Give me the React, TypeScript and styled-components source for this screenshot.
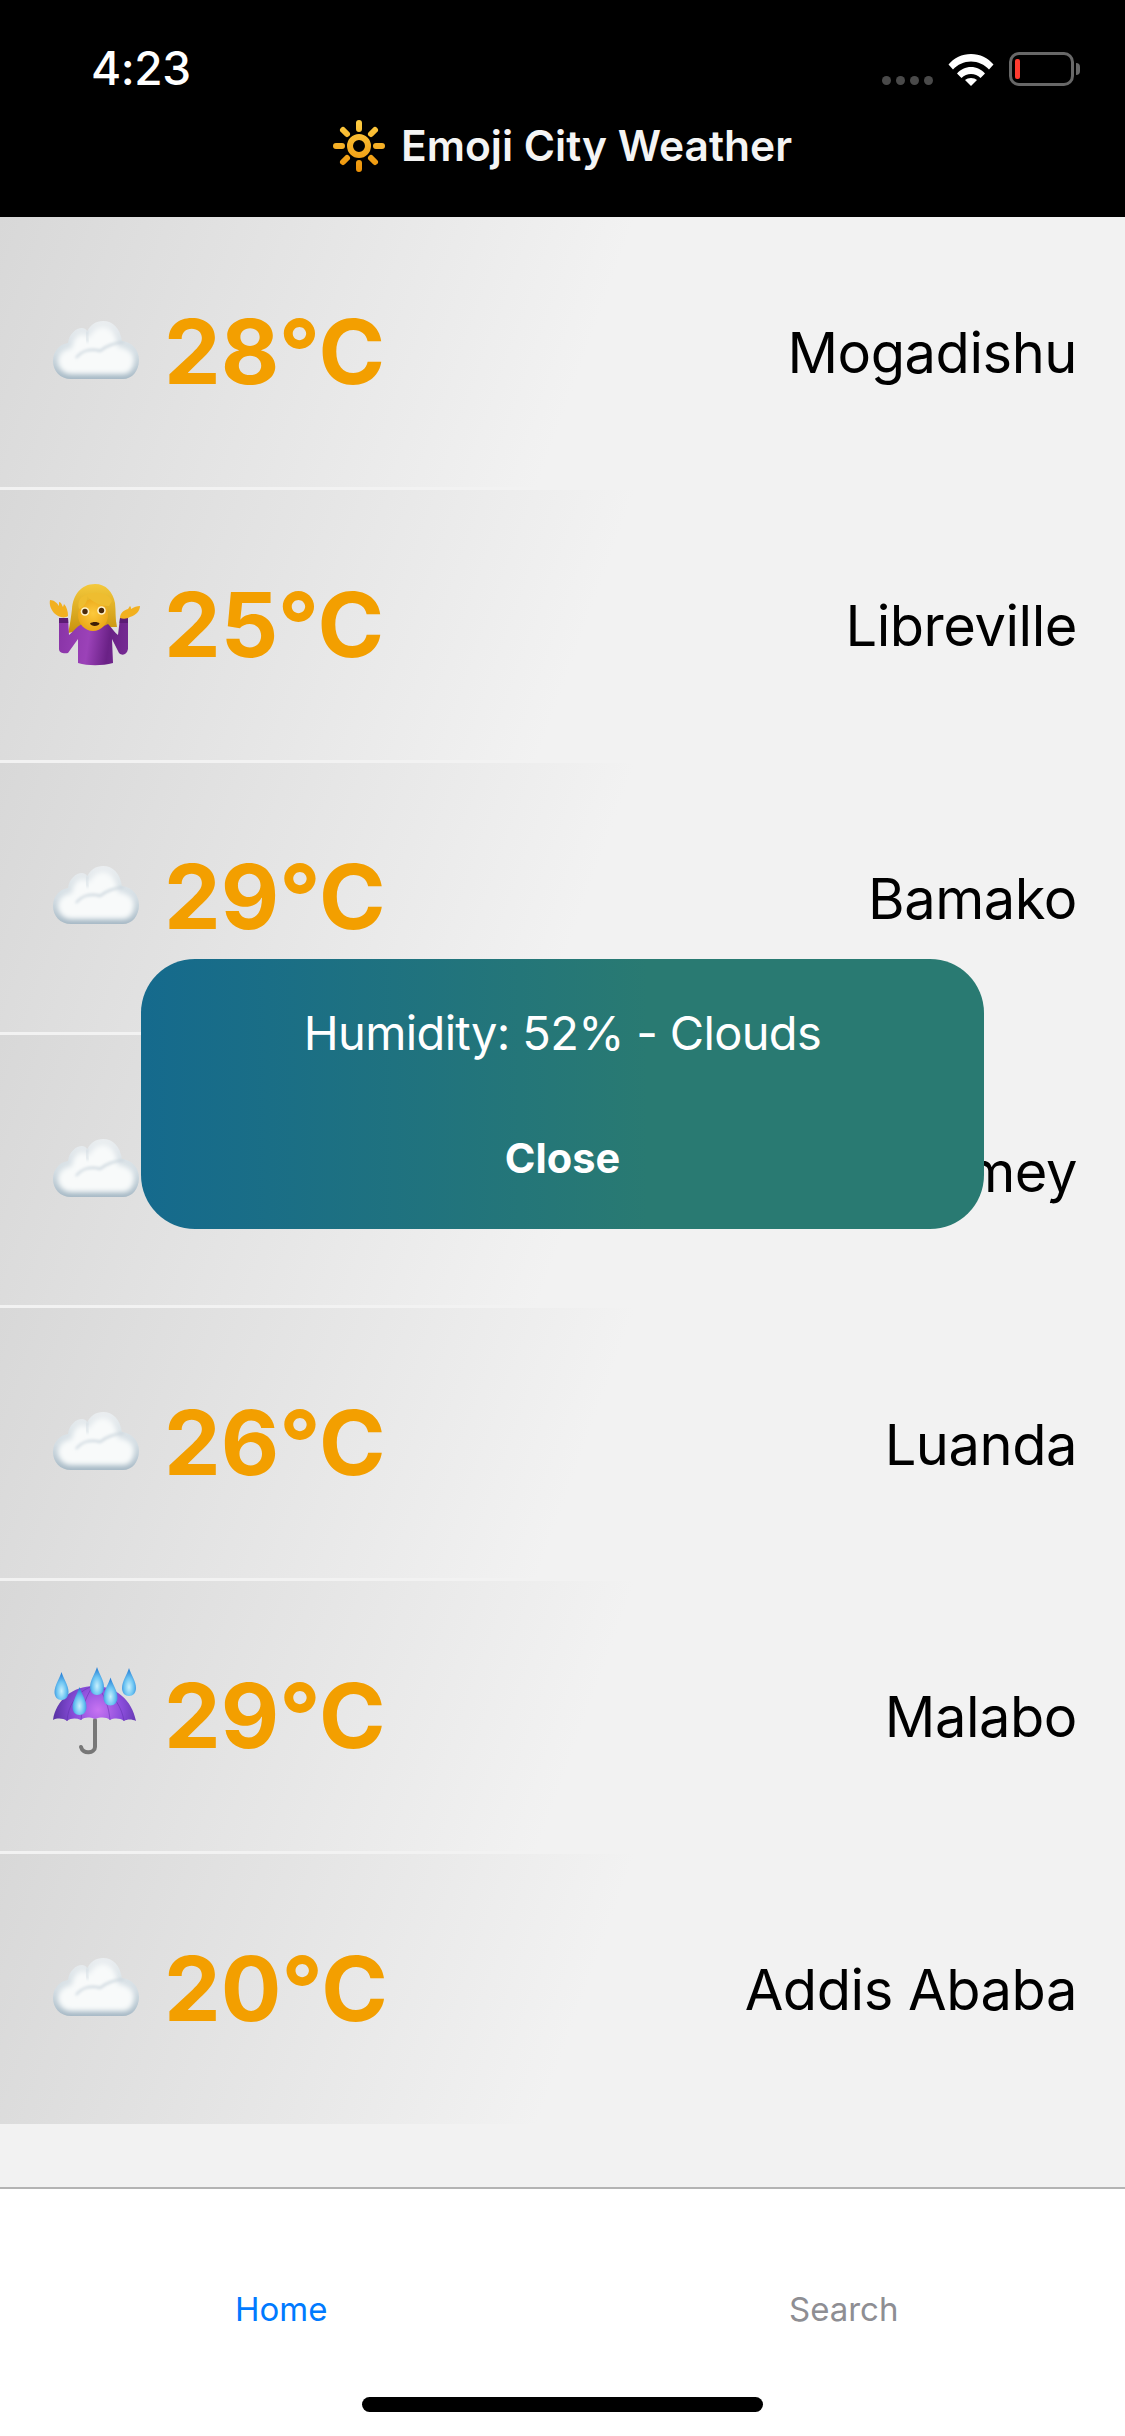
import React from "react";
import styled, { createGlobalStyle } from "styled-components";

const Global = createGlobalStyle`
  html, body { margin: 0; padding: 0; background: #f2f2f2; }
  body { font-family: Inter, "Liberation Sans", sans-serif; }
  #root { width: 1125px; height: 2436px; overflow: hidden; }
`;

const Screen = styled.div`
  position: relative;
  width: 1125px;
  height: 2436px;
  display: flex;
  flex-direction: column;
  background: #f2f2f2;
`;

const Sprite = styled.svg`
  position: absolute;
  width: 0;
  height: 0;
  overflow: hidden;
`;

const Header = styled.header`
  height: 217px;
  flex: none;
  background: #000;
  box-sizing: border-box;
  padding-top: 48px;
  display: flex;
  flex-direction: column;
`;

const StatusBar = styled.div`
  height: 41px;
  padding: 0 43px 0 91px;
  display: flex;
  align-items: center;
  justify-content: space-between;
`;

const Time = styled.span`
  color: #fff;
  font-size: 46px;
  font-weight: 500;
  line-height: 41px;
  letter-spacing: -0.4px;
`;

const StatusIcons = styled.div`
  display: flex;
  align-items: center;
  height: 34px;
`;

const SignalDots = styled.div`
  display: flex;
  gap: 5px;
  align-self: flex-end;
  margin-bottom: 1px;
  margin-right: 15px;
`;

const SignalDot = styled.i`
  width: 9px;
  height: 9px;
  border-radius: 50%;
  background: #4a4a4a;
`;

const Wifi = styled.svg`
  width: 46px;
  height: 34px;
  margin-right: 15px;
`;

const Battery = styled.div`
  position: relative;
  width: 65px;
  height: 34px;
  box-sizing: border-box;
  border: 3px solid #686868;
  border-radius: 10px;
  padding: 4px 3px;
  margin-right: 8px;
  &::after {
    content: "";
    position: absolute;
    right: -9px;
    top: 8px;
    width: 4px;
    height: 12px;
    border-radius: 0 5px 5px 0;
    background: #686868;
  }
`;

const BatteryFill = styled.div`
  width: 5px;
  height: 100%;
  border-radius: 2px;
  background: #ff3b30;
`;

const Title = styled.div`
  margin-top: 24px;
  display: flex;
  align-items: center;
  justify-content: center;
  gap: 16px;
  height: 66px;
`;

const TitleText = styled.h1`
  margin: 0;
  color: #f4f4f4;
  font-size: 42.5px;
  font-weight: 600;
  line-height: 50px;
  letter-spacing: 0;
`;

const SunIcon = styled.svg`
  width: 52px;
  height: 54px;
`;

const List = styled.main`
  flex: 1;
  display: flex;
  flex-direction: column;
  gap: 3px;
  background: #f2f2f2;
`;

const Row = styled.div`
  height: 269.8px;
  flex: none;
  box-sizing: border-box;
  padding: 0 48px 0 40px;
  display: flex;
  align-items: center;
  justify-content: space-between;
  background: linear-gradient(110deg, #d8d8d8 0%, #f2f2f2 52%);
`;

const RowLeft = styled.div`
  display: flex;
  align-items: center;
  gap: 14px;
`;

const EmojiIcon = styled.svg`
  width: 110px;
  height: 100px;
  flex: none;
`;

const Temperature = styled.span`
  color: #f39f00;
  font-size: 90px;
  font-weight: 700;
  line-height: 100px;
  letter-spacing: 0;
`;

const City = styled.span`
  color: #000;
  font-size: 56px;
  font-weight: 400;
  line-height: 70px;
  letter-spacing: -0.45px;
  padding-top: 3px;
`;

const PopupLayer = styled.div`
  position: absolute;
  top: 959px;
  left: 0;
  right: 0;
  display: flex;
  justify-content: center;
`;

const Popup = styled.div`
  width: 843px;
  height: 270px;
  box-sizing: border-box;
  padding-top: 44px;
  border-radius: 54px;
  background: linear-gradient(90deg, #156a8d 0%, #297a72 60%);
  display: flex;
  flex-direction: column;
  align-items: center;
  color: #fff;
`;

const PopupText = styled.p`
  margin: 0;
  font-size: 47px;
  font-weight: 400;
  line-height: 60px;
  letter-spacing: -0.65px;
`;

const CloseButton = styled.button`
  margin-top: 70px;
  padding: 0;
  border: 0;
  background: none;
  color: #fff;
  font: 700 41.5px/50px Inter, "Liberation Sans", sans-serif;
`;

const TabBar = styled.nav`
  height: 249px;
  flex: none;
  box-sizing: border-box;
  border-top: 2px solid #b4b4b4;
  background: #fff;
  display: flex;
  flex-direction: column;
  align-items: center;
`;

const Tabs = styled.div`
  width: 100%;
  height: 208px;
  flex: none;
  box-sizing: border-box;
  padding-top: 100px;
  display: flex;
`;

const Tab = styled.div<{ $active?: boolean }>`
  flex: 1;
  text-align: center;
  font-size: 33px;
  line-height: 40px;
  color: ${(p) => (p.$active ? "#007aff" : "#8e8e93")};
`;

const HomeIndicator = styled.div`
  width: 401px;
  height: 15px;
  border-radius: 8px;
  background: #000;
`;

type Kind = "cloud" | "shrug" | "umbrella";

const rows: { kind: Kind; temp: number; city: string }[] = [
  { kind: "cloud", temp: 28, city: "Mogadishu" },
  { kind: "shrug", temp: 25, city: "Libreville" },
  { kind: "cloud", temp: 29, city: "Bamako" },
  { kind: "cloud", temp: 27, city: "Niamey" },
  { kind: "cloud", temp: 26, city: "Luanda" },
  { kind: "umbrella", temp: 29, city: "Malabo" },
  { kind: "cloud", temp: 20, city: "Addis Ababa" },
];

const CLOUD =
  "M31 68C20 68 13 60 13 50C13 40 20 33 28 32C29 23 36 17 42 17C44 17 46 18 47.5 20C50 14 56 10 63 10C73 10 80 17 82 30C92 31 99 39 99 49C99 60 92 68 83 68Z";
const DROP = "M0 -16C2 -9 7 -3 7 4C7 9 4 12 0 12C-4 12 -7 9 -7 4C-7 -3 -2 -9 0 -16Z";

const Defs = () => (
  <Sprite aria-hidden="true">
    <defs>
      <filter id="blur3" x="-20%" y="-20%" width="140%" height="140%">
        <feGaussianBlur stdDeviation="2.8" />
      </filter>
      <filter id="blur1" x="-20%" y="-20%" width="140%" height="140%">
        <feGaussianBlur stdDeviation="1.4" />
      </filter>
      <clipPath id="cloudClip">
        <path d={CLOUD} />
      </clipPath>
      <linearGradient id="cloudEdge" x1="0" y1="0" x2="0" y2="1">
        <stop offset="0" stopColor="#eceff1" />
        <stop offset="0.55" stopColor="#d3dde3" />
        <stop offset="1" stopColor="#a3b6c3" />
      </linearGradient>
      <linearGradient id="hairGrad" x1="0" y1="0" x2="0" y2="1">
        <stop offset="0" stopColor="#f4c93c" />
        <stop offset="1" stopColor="#c8920e" />
      </linearGradient>
      <radialGradient id="skinGrad" cx="0.5" cy="0.45" r="0.6">
        <stop offset="0" stopColor="#fcc93c" />
        <stop offset="1" stopColor="#e9a313" />
      </radialGradient>
      <linearGradient id="sweaterGrad" gradientUnits="userSpaceOnUse" x1="20" y1="60" x2="88" y2="70">
        <stop offset="0" stopColor="#8a35a8" />
        <stop offset="0.42" stopColor="#9b42b8" />
        <stop offset="0.72" stopColor="#6a2186" />
        <stop offset="1" stopColor="#762a93" />
      </linearGradient>
      <radialGradient id="canopyGrad" gradientUnits="userSpaceOnUse" cx="58" cy="44" r="44">
        <stop offset="0" stopColor="#c874f2" />
        <stop offset="0.55" stopColor="#8a4ddb" />
        <stop offset="1" stopColor="#5a33a6" />
      </radialGradient>
      <radialGradient id="dropGrad" cx="0.5" cy="0.68" r="0.6">
        <stop offset="0" stopColor="#c8f0fd" />
        <stop offset="0.55" stopColor="#6cc4f2" />
        <stop offset="1" stopColor="#2c84d8" />
      </radialGradient>
      <linearGradient id="sunGrad" gradientUnits="userSpaceOnUse" x1="0" y1="8" x2="0" y2="62">
        <stop offset="0" stopColor="#ffcf45" />
        <stop offset="1" stopColor="#ec8f05" />
      </linearGradient>
    </defs>
    <symbol id="emoji-cloud" viewBox="0 0 110 100">
      <g transform="translate(0 9)" clipPath="url(#cloudClip)">
        <rect y="8" width="110" height="62" fill="url(#cloudEdge)" />
        <path
          d="M31 63C24 63 18 57 18 50C18 43 24 38 32 37C33 28 38 23 43 23C46 23 48 25 49 27C52 20 57 16 63 16C71 16 76 23 78 36C88 37 94 42 94 49C94 57 90 63 83 63Z"
          fill="#f8fafa"
          filter="url(#blur3)"
        />
        <path
          d="M36 47C42 39 52 37 60 40C66 35 74 32 84 31"
          fill="none"
          stroke="#c9d4dc"
          strokeWidth="2"
          filter="url(#blur1)"
        />
        <path d="M47.5 20C46 23 46 28 48 31" fill="none" stroke="#c9d4dc" strokeWidth="1.5" filter="url(#blur1)" />
      </g>
    </symbol>
    <symbol id="emoji-shrug" viewBox="0 0 110 100">
      <path
        d="M55 9C41 9 33 20 32 34C31 42 30 50 28 58L38 56L72 52L77 52C75 44 76 36 75 28C73 17 66 9 55 9Z"
        fill="url(#hairGrad)"
      />
      <path
        d="M19 43L28 43L29 60C33 57 36 52 42 49C48 53 60 54 68 49C72 53 75 58 78 60L80 43L88 43L88 74C87 80 82 81 79 78L72 64L73 88C62 91 48 91 38 88L38 64L28 78C24 79 19 78 19 74Z"
        fill="url(#sweaterGrad)"
      />
      <path d="M19 43L28 43L28.3 48L19 48Z M80 43L88 43L88 48L79.5 48Z" fill="#5c1c75" />
      <ellipse cx="53" cy="40" rx="15" ry="16" fill="url(#skinGrad)" />
      <path d="M39 34C44 32 48 27 47 21C52 27 60 31 69 31L72 26C68 16 48 15 40 24C38 27 38 31 39 34Z" fill="#eebd30" />
      <ellipse cx="45" cy="36.5" rx="4.3" ry="4.3" fill="#fff3c9" />
      <circle cx="45" cy="36.5" r="2.7" fill="#4a2a0b" />
      <ellipse cx="61.5" cy="35.5" rx="4.3" ry="4.3" fill="#fff3c9" />
      <circle cx="61.5" cy="35.5" r="2.7" fill="#4a2a0b" />
      <path d="M50 48.5C52 46.5 58 46.5 59.5 48.5C59 51.5 51 52 50 48.5Z" fill="#3d1f07" />
      <path
        d="M10 25C14 25 17 28 19 31L19 27C21 27 22 30 23 32L24 29C27 32 28 37 28 41C24 44 18 42 14 38C11 34 9 30 10 25Z"
        fill="#f2b01f"
      />
      <path
        d="M80 43C80 38 84 35 88 34L90 31C91 32 91 33 91 34C94 32 97 31 100 31C100 36 96 40 90 42C87 44 83 44 80 43Z"
        fill="#f2b01f"
      />
    </symbol>
    <symbol id="emoji-umbrella" viewBox="0 0 110 100">
      <path
        d="M55 54L55 81C55 87 43 89 41 81"
        fill="none"
        stroke="#777"
        strokeWidth="4"
        strokeLinecap="round"
      />
      <path
        d="M13 54C16 34 33 20 54 20C76 20 92 34 96 55C92 53 87 53 84 55C80 52 74 52 70 54C66 51 61 51 55 53C49 51 45 51 41 54C36 52 31 52 27 55C23 52 17 52 13 54Z"
        fill="url(#canopyGrad)"
      />
      <path d="M27 55C28 40 36 27 50 21M41 54C42 42 46 30 53 20M70 54C69 42 65 29 57 20M84 55C82 42 74 28 60 21" fill="none" stroke="#5a2fa6" strokeWidth="0.9" opacity="0.55" />
      <g fill="url(#dropGrad)">
        <path d={DROP} transform="translate(21.5 22)" />
        <path d={DROP} transform="translate(57 17)" />
        <path d={DROP} transform="translate(70.5 27.5)" />
        <path d={DROP} transform="translate(39.5 37)" />
        <path d={DROP} transform="translate(89 18)" />
      </g>
    </symbol>
  </Sprite>
);

const Sun = () => (
  <SunIcon viewBox="14 8 52 54" aria-hidden="true">
    <g stroke="url(#sunGrad)" fill="none" strokeLinecap="round">
      <circle cx="40" cy="35" r="9" strokeWidth="6" />
      <path strokeWidth="6" d="M40 12V18M40 52V58M17 35H23M57 35H63M24 19L28 23M52 47L56 51M56 19L52 23M28 47L24 51" />
    </g>
  </SunIcon>
);

export default function App() {
  return (
    <Screen>
      <Global />
      <Defs />
      <Header>
        <StatusBar>
          <Time>4:23</Time>
          <StatusIcons>
            <SignalDots>
              <SignalDot />
              <SignalDot />
              <SignalDot />
              <SignalDot />
            </SignalDots>
            <Wifi viewBox="0 0 46 34" aria-hidden="true">
              <path
                d="M0.5 12.5C6 6 14 2 23 2C32 2 40 6 45.5 12.5L41 17.5C36.5 12.5 30 9.5 23 9.5C16 9.5 9.5 12.5 5 17.5Z"
                fill="#fff"
              />
              <path
                d="M9 21.5C12.5 17.5 17.5 15 23 15C28.5 15 33.5 17.5 37 21.5L32.5 26C30 23.5 26.5 22 23 22C19.5 22 16 23.5 13.5 26Z"
                fill="#fff"
              />
              <path d="M17 28C18.5 26.7 20.7 26 23 26C25.3 26 27.5 26.7 29 28L23 34Z" fill="#fff" />
            </Wifi>
            <Battery>
              <BatteryFill />
            </Battery>
          </StatusIcons>
        </StatusBar>
        <Title>
          <Sun />
          <TitleText>Emoji City Weather</TitleText>
        </Title>
      </Header>
      <List>
        {rows.map((r) => (
          <Row key={r.city}>
            <RowLeft>
              <EmojiIcon aria-hidden="true">
                <use href={`#emoji-${r.kind}`} />
              </EmojiIcon>
              <Temperature>{r.temp}°C</Temperature>
            </RowLeft>
            <City>{r.city}</City>
          </Row>
        ))}
      </List>
      <PopupLayer>
        <Popup>
          <PopupText>Humidity: 52% - Clouds</PopupText>
          <CloseButton>Close</CloseButton>
        </Popup>
      </PopupLayer>
      <TabBar>
        <Tabs>
          <Tab $active>Home</Tab>
          <Tab>Search</Tab>
        </Tabs>
        <HomeIndicator />
      </TabBar>
    </Screen>
  );
}
